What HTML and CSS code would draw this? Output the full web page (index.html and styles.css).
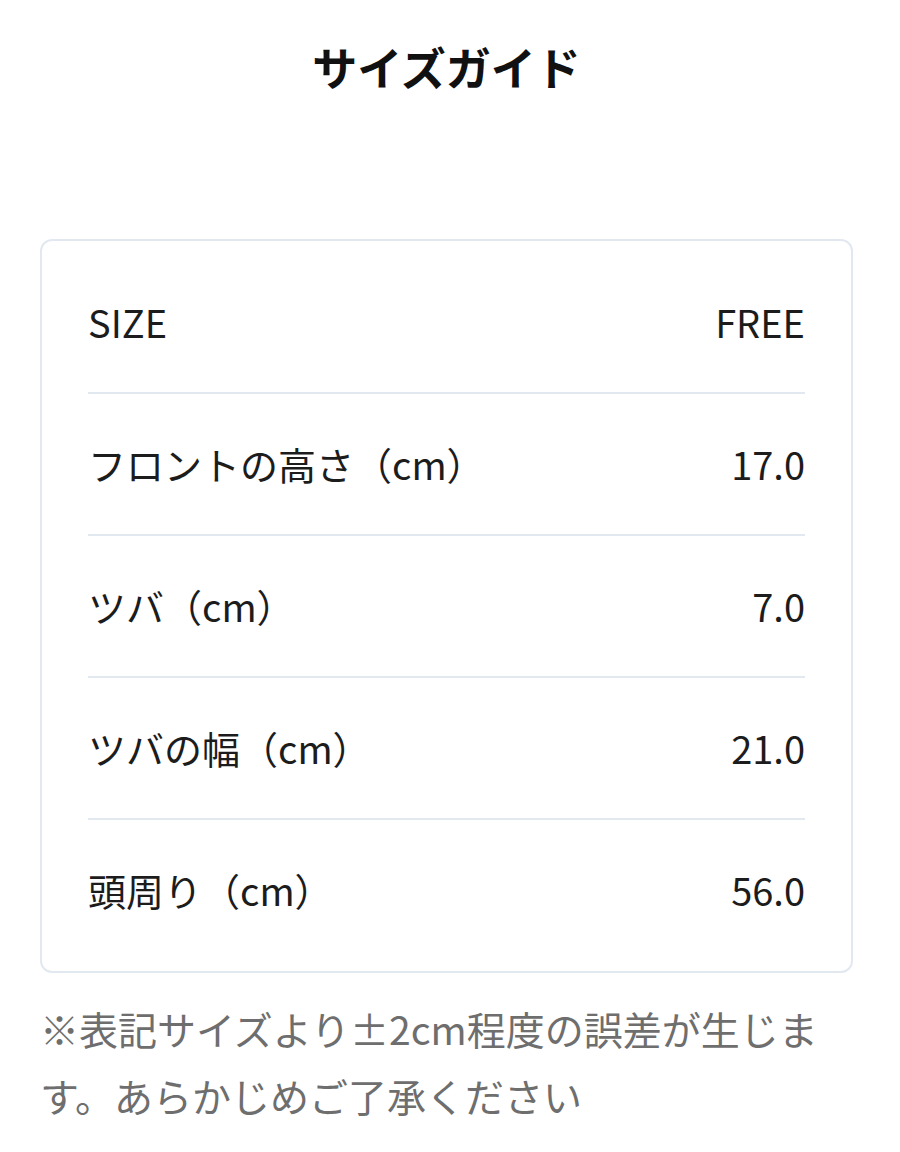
FILE: index.html
```html
<!DOCTYPE html>
<html lang="ja">
<head>
<meta charset="utf-8">
<link rel="stylesheet" href="styles.css">
</head>
<body>
<div class="page">
  <h1 class="title">サイズガイド</h1>
  <div class="card">
    <div class="row"><span class="label">SIZE</span><span class="value">FREE</span></div>
    <div class="row"><span class="label">フロントの高さ（cm）</span><span class="value">17.0</span></div>
    <div class="row"><span class="label">ツバ（cm）</span><span class="value">7.0</span></div>
    <div class="row"><span class="label">ツバの幅（cm）</span><span class="value">21.0</span></div>
    <div class="row"><span class="label">頭周り（cm）</span><span class="value">56.0</span></div>
  </div>
  <p class="note">※表記サイズより±2cm程度の誤差が生じます。あらかじめご了承ください</p>
</div>
</body>
</html>
```
FILE: styles.css
```css
html, body {
  margin: 0;
  padding: 0;
  background: #ffffff;
}
body {
  font-family: "Noto Sans CJK JP", "Noto Sans", sans-serif;
  color: #1c1c1c;
}
.page {
  width: 813px;
  margin-left: 40px;
}
.title {
  margin: 34px 0 0;
  font-size: 45px;
  line-height: 66px;
  font-weight: 700;
  text-align: center;
  color: #111111;
}
.card {
  margin-top: 139px;
  border: 2px solid #e2e8f0;
  border-radius: 12px;
  padding: 11px 46px 11px;
}
.row {
  display: flex;
  justify-content: space-between;
  align-items: center;
  height: 140px;
  border-bottom: 2px solid #e2e8f0;
  font-size: 38px;
  line-height: 1.4;
}
.row:last-child {
  border-bottom: none;
}
.note {
  margin: 22px 0 0;
  font-size: 39px;
  line-height: 67px;
  color: #6e6e6e;
}
```
